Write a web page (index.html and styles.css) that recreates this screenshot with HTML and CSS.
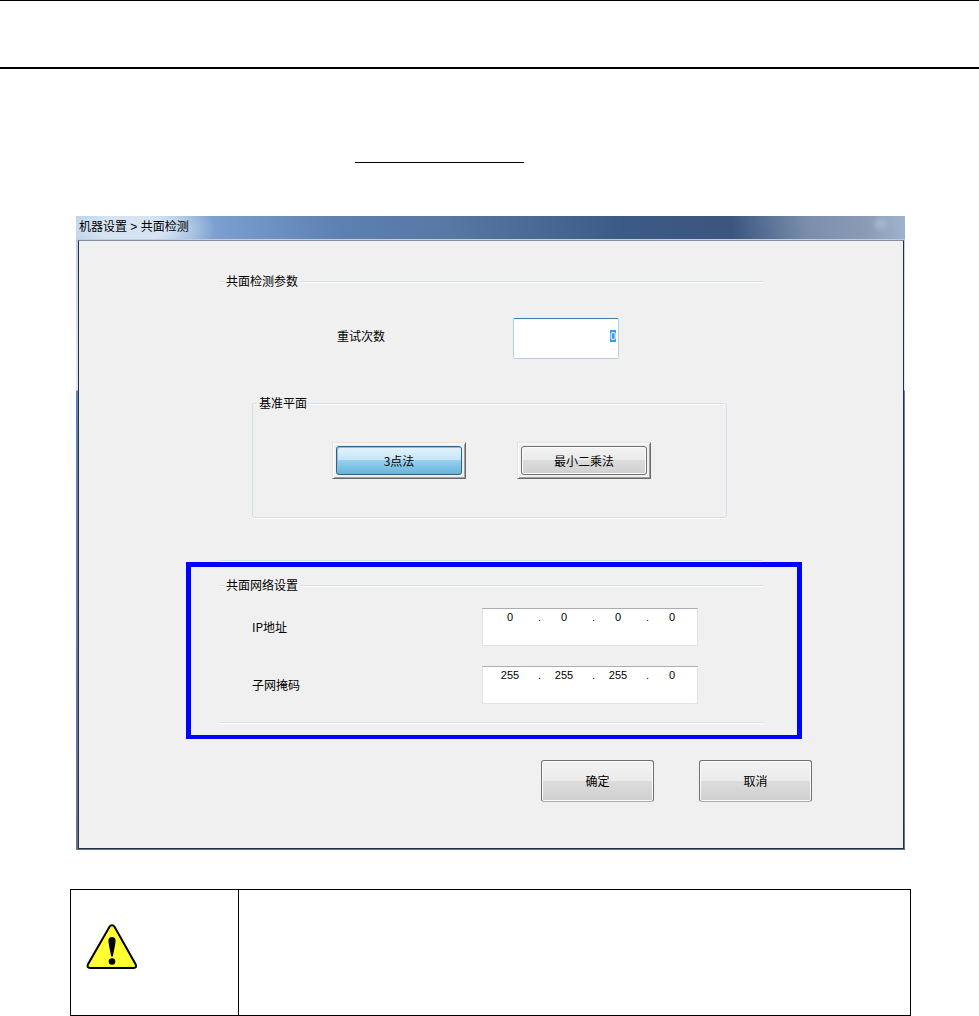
FILE: index.html
```html
<!DOCTYPE html>
<html lang="zh">

<head>
  <meta charset="UTF-8">
  <meta name="viewport" content="width=device-width, initial-scale=1.0">
  <title>机器设置 &gt; 共面检测</title>
  <link rel="stylesheet" href="styles.css">
</head>

<body>
  <header class="page-header"></header>
  <div class="underline"></div>

  <main class="dialog">
    <h1 class="dialog-title">机器设置 &gt; 共面检测</h1>
    <form class="dialog-body">
      <fieldset class="group group-params">
        <legend>共面检测参数</legend>
        <div class="row row-retry">
          <label for="retry">重试次数</label>
          <input type="text" id="retry" class="retry-input" value="0">
        </div>
        <fieldset class="group group-plane">
          <legend>基准平面</legend>
          <div class="methods">
            <div class="method-frame"><button type="button" class="btn btn-active">3点法</button></div>
            <div class="method-frame"><button type="button" class="btn">最小二乘法</button></div>
          </div>
        </fieldset>
      </fieldset>

      <div class="highlight">
        <fieldset class="group group-network">
          <legend>共面网络设置</legend>
          <div class="row">
            <label for="ip1">IP地址</label>
            <div class="ip-box">
              <input type="text" id="ip1" value="0"><span>.</span>
              <input type="text" aria-label="IP地址 2" value="0"><span>.</span>
              <input type="text" aria-label="IP地址 3" value="0"><span>.</span>
              <input type="text" aria-label="IP地址 4" value="0">
            </div>
          </div>
          <div class="row">
            <label for="mask1">子网掩码</label>
            <div class="ip-box">
              <input type="text" id="mask1" value="255"><span>.</span>
              <input type="text" aria-label="子网掩码 2" value="255"><span>.</span>
              <input type="text" aria-label="子网掩码 3" value="255"><span>.</span>
              <input type="text" aria-label="子网掩码 4" value="0">
            </div>
          </div>
        </fieldset>
      </div>

      <div class="actions">
        <button type="button" class="btn btn-large">确定</button>
        <button type="button" class="btn btn-large">取消</button>
      </div>
    </form>
  </main>

  <table class="notice">
    <tr>
      <td class="notice-icon">
        <svg width="52" height="46" viewBox="0 0 52 46">
          <path d="M23.2 3.2Q26 -0.6 28.8 3.2L49.6 40.2Q51.2 44 47.6 44H4.2Q0.4 44 2 40.2Z" fill="#ffff33" stroke="#000" stroke-width="2"/>
          <path d="M22.4 17Q22.4 13 26 13T29.6 17Q29.6 19 26.8 32.5H25.2Q22.4 19 22.4 17Z"/>
          <circle cx="26" cy="37.5" r="3.3"/>
        </svg>
      </td>
      <td></td>
    </tr>
  </table>

  <script>
    const retry = document.getElementById('retry');
    retry.focus();
    retry.select();
  </script>
</body>

</html>
```
FILE: styles.css
```css
body {
  margin: 0;
  background: #fff;
  color: #000;
  font-family: "Noto Sans CJK SC", sans-serif;
  font-size: 12px;
  line-height: 14px;
}

input,
button {
  box-sizing: border-box;
  margin: 0;
  font: inherit;
  color: inherit;
}

.page-header {
  height: 66px;
  border-top: 1px solid #000;
  border-bottom: 2px solid #000;
}

.underline {
  width: 169px;
  margin: 93px 0 53px 355px;
  border-top: 1px solid #000;
}

/* window */
.dialog {
  margin: 0 74px 0 76px;
  padding: 0 1px 1px 2px;
  background: linear-gradient(#b9d1ea 24px, #dce8f4 174px, #5f84b8 175px, #64758f);
}

.dialog-title {
  margin: 0 -1px 0 -2px;
  padding: 0 3px;
  border-bottom: 1px solid #c3cce0;
  background:
    radial-gradient(circle at 805px 8px, #a9bace, transparent 9px),
    radial-gradient(ellipse 85px 34px at 55px 12px, rgba(220, 232, 244, 0.9) 40%, rgba(220, 232, 244, 0)),
    linear-gradient(80deg, #a9c6e8, #9dbbe0 10%, #7b9fce 17%, #5d80b0 32%, #5878a4 45%, #3c5a86 66%, #3b5780 79%, #7a8eab 88%, #8b9bb6 95%, #9fb4cc);
  font-family: "Liberation Sans", "Noto Sans CJK SC", sans-serif;
  font-size: 12px;
  font-weight: normal;
  line-height: 23px;
}

.dialog-body {
  padding: 33px 0 46px;
  border: 1px solid #253044;
  border-top-color: #858da0;
  background: #f0f0f0;
}

/* group boxes */
.group {
  min-width: 0;
  margin: 0;
  padding: 0;
  border: 1px solid #d5dfe5;
  box-shadow: 0 1px #fff, inset 0 1px #fff;
}

.group legend {
  margin-left: 4px;
  padding: 0 2px;
  background: #f0f0f0;
}

.group-params,
.group-network {
  border-left-color: #ebf0f1;
  border-right-color: #ebf0f1;
}

.group-params {
  margin: 0 140px;
  padding: 30px 0 42px;
}

.group-plane {
  margin: 37px 35px 0 32px;
  padding: 32px 0 38px;
  border-color: #d3dfe9;
  border-radius: 3px;
}

.group-network {
  padding: 16px 0 18px;
}

.row {
  display: flex;
  align-items: center;
  padding-left: 32px;
}

.row + .row {
  margin-top: 20px;
}

.row label {
  width: 230px;
}

.row-retry {
  padding-left: 117px;
}

.row-retry label {
  width: 176px;
  padding-bottom: 5px;
}

.retry-input {
  width: 106px;
  height: 41px;
  padding: 0 2px 5px;
  border: 1px solid #b5cfe7;
  border-top-color: #3d7bad;
  border-radius: 2px;
  outline: none;
  background: #fff;
  font-family: "Liberation Sans", sans-serif;
  font-size: 11px;
  text-align: right;
}

.retry-input::selection {
  background: #3399ff;
  color: #fff;
}

/* buttons */
.methods {
  display: flex;
  gap: 51px;
  padding-left: 79px;
}

.method-frame {
  display: flex;
  padding: 3px;
  border: 1px solid #e3e3e3;
  border-right-color: #696969;
  border-bottom-color: #696969;
  box-shadow: inset 1px 1px #fff, inset -1px -1px #a0a0a0;
}

.btn {
  width: 126px;
  height: 29px;
  padding: 0;
  border: 1px solid #707070;
  border-radius: 3px;
  background: linear-gradient(#f2f2f2, #ebebeb 50%, #dddddd 50%, #cfcfcf);
  box-shadow: inset 0 0 0 1px #fafafa;
}

.btn-active {
  border-color: #2c628b;
  background: linear-gradient(#e5f4fc, #c4e5f6 50%, #98d1ef 50%, #68b3db);
  box-shadow: inset 1px 1px #9db9cb;
}

.btn-large {
  width: 113px;
  height: 42px;
  border-bottom-color: #adadad;
}

.highlight {
  margin: 1px 101px 0 107px;
  padding: 11px 34px 12px 28px;
  border: 5px solid #0000ff;
  border-bottom-width: 4px;
}

.ip-box {
  display: flex;
  box-sizing: border-box;
  width: 216px;
  height: 38px;
  padding: 1px 2px 0 4px;
  border: 1px solid #e2e3ea;
  border-top-color: #abadb3;
  background: #fff;
  font-family: "Liberation Sans", sans-serif;
  font-size: 11px;
}

.ip-box input {
  flex: 1;
  min-width: 0;
  height: 14px;
  padding: 0;
  border: none;
  outline: none;
  background: none;
  text-align: center;
}

.ip-box span {
  width: 8px;
  text-align: right;
}

.actions {
  display: flex;
  justify-content: flex-end;
  gap: 45px;
  margin-top: 21px;
  padding-right: 91px;
}

.notice {
  width: calc(100% - 138px);
  height: 127px;
  margin: 39px 68px 0 70px;
  border: 1px solid #000;
  border-spacing: 0;
}

.notice td {
  padding: 0;
}

.notice .notice-icon {
  box-sizing: border-box;
  width: 168px;
  padding: 34px 0 0 15px;
  border-right: 1px solid #000;
  vertical-align: top;
}

.notice-icon svg {
  display: block;
}
```
